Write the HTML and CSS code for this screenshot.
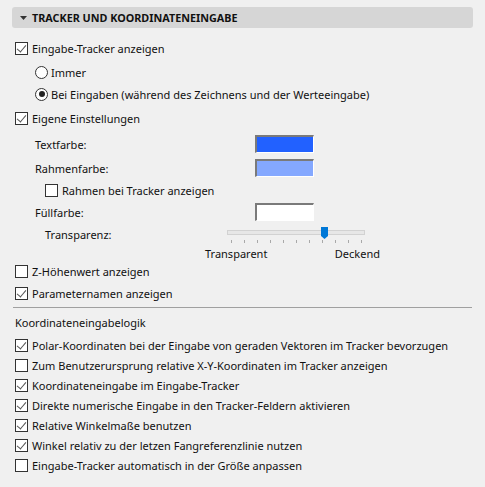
FILE: index.html
```html
<!DOCTYPE html>
<html lang="de">
<head>
<meta charset="utf-8">
<link rel="stylesheet" href="styles.css">
</head>
<body>
<div class="panel">
  <div class="header">
    <svg class="tri" width="7" height="4" viewBox="0 0 7 4"><path d="M0 0H7L3.5 4Z" fill="#333"/></svg>
    <span class="htitle">TRACKER UND KOORDINATENEINGABE</span>
  </div>

  <div class="row r22 m9 l0"><span class="cb on"></span><span>Eingabe-Tracker anzeigen</span></div>
  <div class="row r22 m2 l1"><span class="rb"></span><span>Immer</span></div>
  <div class="row r22 l1"><span class="rb sel"></span><span>Bei Eingaben (während des Zeichnens und der Werteeingabe)</span></div>
  <div class="row r22 m2 l0"><span class="cb on"></span><span>Eigene Einstellungen</span></div>

  <div class="colorrow r22 m4"><span class="clabel">Textfarbe:</span><span class="swatch sw-text"></span></div>
  <div class="colorrow r22 m2"><span class="clabel">Rahmenfarbe:</span><span class="swatch sw-frame"></span></div>
  <div class="row r22 l2"><span class="cb"></span><span>Rahmen bei Tracker anzeigen</span></div>
  <div class="colorrow r22"><span class="clabel">Füllfarbe:</span><span class="swatch sw-fill"></span></div>

  <div class="sliderrow">
    <span class="slabel">Transparenz:</span>
    <div class="slider">
      <div class="track"></div>
      <div class="thumb"><svg width="7" height="12" viewBox="0 0 7 12"><path d="M0 0H7V9L3.5 12L0 9Z" fill="#0078d7"/></svg></div>
      <div class="ticks"><i></i><i></i><i></i><i></i><i></i><i></i><i></i><i></i><i></i><i></i><i></i></div>
      <div class="slabels"><span class="lt">Transparent</span><span class="rt">Deckend</span></div>
    </div>
  </div>

  <div class="row r22 l0"><span class="cb"></span><span>Z-Höhenwert anzeigen</span></div>
  <div class="row r22 l0"><span class="cb on"></span><span>Parameternamen anzeigen</span></div>

  <div class="sep"></div>

  <div class="row r22 m3 l0 title">Koordinateneingabelogik</div>

  <div class="list">
    <div class="row r20 l0"><span class="cb on"></span><span>Polar-Koordinaten bei der Eingabe von geraden Vektoren im Tracker bevorzugen</span></div>
    <div class="row r20 l0"><span class="cb"></span><span>Zum Benutzerursprung relative X-Y-Koordinaten im Tracker anzeigen</span></div>
    <div class="row r20 l0"><span class="cb on"></span><span>Koordinateneingabe im Eingabe-Tracker</span></div>
    <div class="row r20 l0"><span class="cb on"></span><span>Direkte numerische Eingabe in den Tracker-Feldern aktivieren</span></div>
    <div class="row r20 l0"><span class="cb on"></span><span>Relative Winkelmaße benutzen</span></div>
    <div class="row r20 l0"><span class="cb on"></span><span>Winkel relativ zu der letzen Fangreferenzlinie nutzen</span></div>
    <div class="row r20 l0"><span class="cb"></span><span>Eingabe-Tracker automatisch in der Größe anpassen</span></div>
  </div>
</div>
</body>
</html>
```

FILE: styles.css
```css
* { box-sizing: border-box; }
html, body { margin: 0; padding: 0; }
body {
  width: 485px;
  height: 487px;
  background: #f0f0f0;
  font-family: "Noto Sans", "Open Sans", sans-serif;
  font-size: 11px;
  color: #111;
  overflow: hidden;
}
.panel {
  display: flex;
  flex-direction: column;
  padding-top: 7px;
}
.header {
  margin-left: 12px;
  width: 461px;
  height: 21px;
  background: #d6d6d6;
  border-radius: 3px;
  display: flex;
  align-items: center;
  padding-left: 8px;
}
.tri { margin-right: 5px; }
.htitle {
  font-weight: 700;
  font-size: 10.8px;
  color: #111;
}
.row {
  display: flex;
  align-items: center;
  white-space: nowrap;
}
.r22 { height: 22px; }
.r20 { height: 20px; }
.m2 { margin-top: 2px; }
.m3 { margin-top: 3px; }
.m4 { margin-top: 4px; }
.m9 { margin-top: 9px; }
.l0 { padding-left: 15px; }
.l1 { padding-left: 35px; }
.l2 { padding-left: 45px; }

.cb {
  width: 13px;
  height: 13px;
  border: 1px solid #333;
  background: #fff;
  margin-right: 4px;
  position: relative;
  flex: none;
}
.cb.on::after {
  content: "";
  position: absolute;
  left: 3px;
  top: 0px;
  width: 4px;
  height: 8px;
  border-right: 1.2px solid #555;
  border-bottom: 1.2px solid #555;
  transform: rotate(40deg);
}
.rb {
  width: 13px;
  height: 13px;
  border: 1px solid #333;
  border-radius: 50%;
  background: #fff;
  margin-right: 3px;
  position: relative;
  flex: none;
}
.rb.sel::after {
  content: "";
  position: absolute;
  left: 2.5px;
  top: 2.5px;
  width: 6px;
  height: 6px;
  border-radius: 50%;
  background: #222;
}

.colorrow {
  display: grid;
  grid-template-columns: 220px 59px;
  align-items: center;
  padding-left: 35px;
}
.swatch {
  height: 18px;
  border-top: 2px solid #7a7a7a;
  border-left: 2px solid #7a7a7a;
  border-right: 1px solid #fff;
  border-bottom: 1px solid #fff;
}
.sw-text { background: #2261ff; }
.sw-frame { background: #84a8ff; }
.sw-fill { background: #ffffff; }

.sliderrow {
  display: flex;
  height: 37px;
  padding-left: 45px;
}
.slabel {
  width: 182px;
  height: 22px;
  display: flex;
  align-items: center;
}
.slider {
  position: relative;
  width: 160px;
  margin-left: -22px;
}
.track {
  position: absolute;
  left: 22px;
  top: 7px;
  width: 138px;
  height: 5px;
  background: #e7e7e7;
  border: 1px solid #d2d2d2;
}
.thumb {
  position: absolute;
  left: 116px;
  top: 4px;
  line-height: 0;
}
.ticks {
  position: absolute;
  left: 26px;
  top: 17px;
  width: 131px;
  display: flex;
  justify-content: space-between;
}
.ticks i {
  display: block;
  width: 1px;
  height: 3px;
  background: #a9a9a9;
}
.slabels {
  position: absolute;
  top: 23px;
  left: 0;
  width: 175px;
  display: flex;
  justify-content: space-between;
  line-height: 16px;
}
.sep {
  margin-top: 3px;
  margin-left: 13px;
  width: 459px;
  height: 1px;
  background: #a0a0a0;
}
.list {
  display: flex;
  flex-direction: column;
  margin-top: 2px;
}
```
